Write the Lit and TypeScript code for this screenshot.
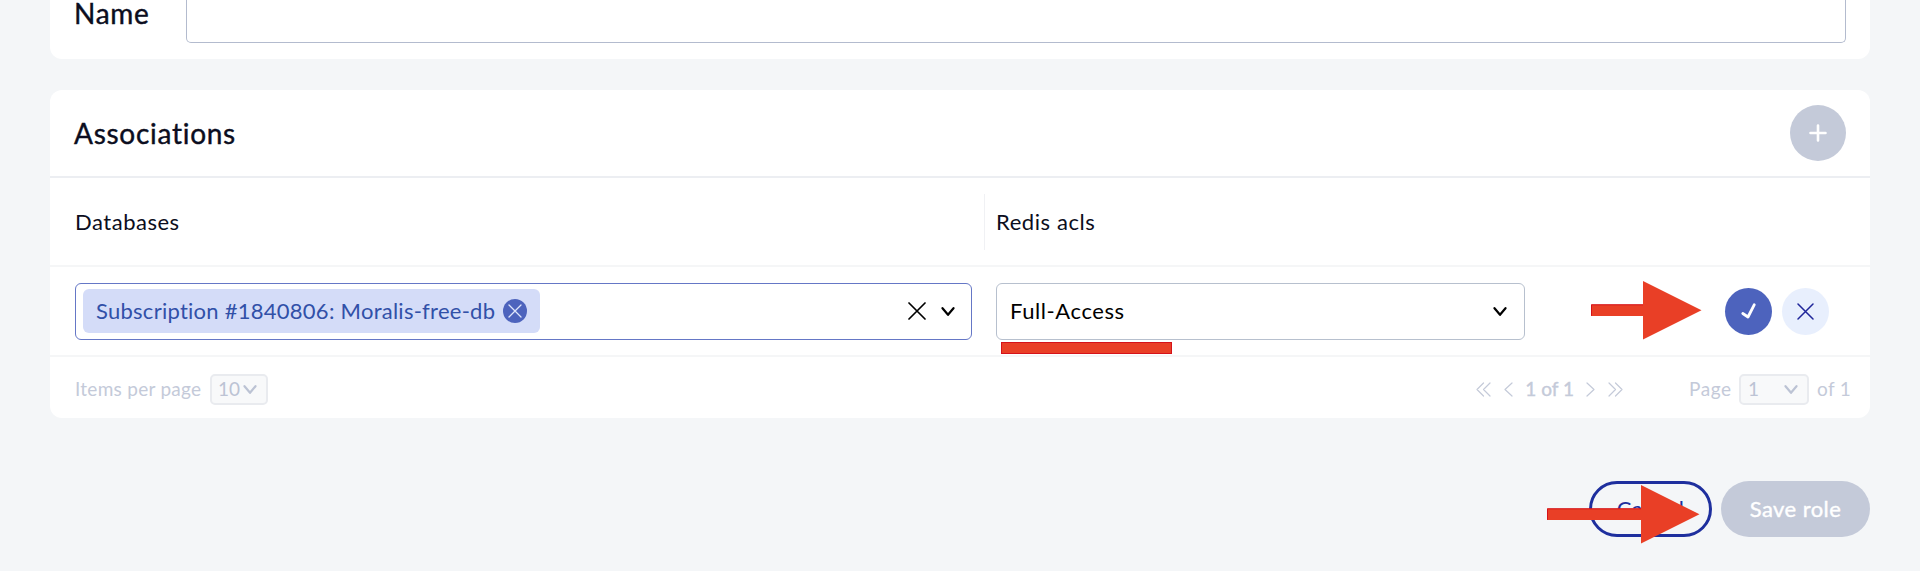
import { LitElement, html, css, svg } from "lit";
import { customElement } from "lit/decorators.js";

const stroke = (d: string, w: number, h: number, sw: number, cls = "") => html`
  <svg class="icon ${cls}" width=${w} height=${h} viewBox="0 0 ${w} ${h}" fill="none"
    stroke="currentColor" stroke-width=${sw} stroke-linecap="round" stroke-linejoin="round">
    ${svg`<path d=${d}></path>`}
  </svg>`;

const chevron = (cls = "") => stroke("M1.5 1.2 L7 7.8 L12.5 1.2", 14, 9, 2.2, cls);
const cross = (s: number, sw: number) => stroke(`M1 1 L${s - 1} ${s - 1} M${s - 1} 1 L1 ${s - 1}`, s, s, sw);

@customElement("red-arrow")
export class RedArrow extends LitElement {
  static properties = { shaft: { type: Number } };
  declare shaft: number;
  static styles = css`
    :host { display: block; line-height: 0; }
  `;
  render() {
    const s = this.shaft;
    return html`<svg width=${s + 59} height="59" viewBox="0 0 ${s + 59} 59">
      <path d="M0 23.5 H${s} V0 L${s + 58.5} 29.3 L${s} 58.5 V35 H0 Z" fill="#e93f26"></path>
      <path d=${`M${s} 23.8 H0.5 V34.7`} fill="none" stroke="#d5121a" stroke-width="1"></path>
    </svg>`;
  }
}

@customElement("app-root")
export class AppRoot extends LitElement {
  static styles = css`
    :host {
      display: block;
      position: relative;
      box-sizing: border-box;
      height: 571px;
      padding: 0 50px;
      overflow: hidden;
      background: #f4f6f8;
      color: #0b0d20;
      font: 22px/30px Lato, "Noto Sans", sans-serif;
      font-variant-ligatures: none;
    }
    * { box-sizing: border-box; }
    .icon { display: block; flex: none; }
    .card { background: #fff; }
    .name {
      display: flex;
      height: 59px;
      padding: 0 24px;
      border-radius: 0 0 12px 12px;
    }
    .title {
      font-size: 28px;
      line-height: 34px;
      letter-spacing: 0.72px;
      -webkit-text-stroke: 0.4px currentColor;
    }
    .name .title { width: 112px; line-height: 27px; }
    .field {
      flex: 1;
      height: 43px;
      border: 1px solid #b3bbce;
      border-top: 0;
      border-radius: 0 0 5px 5px;
    }
    .assoc {
      margin-top: 31px;
      height: 328px;
      border-radius: 12px;
    }
    .head {
      display: flex;
      align-items: center;
      justify-content: space-between;
      height: 88px;
      padding: 0 24px;
      border-bottom: 2px solid #eceef2;
    }
    .head .title { padding-bottom: 1px; }
    .round {
      display: flex;
      align-items: center;
      justify-content: center;
      border-radius: 50%;
    }
    .add { width: 56px; height: 56px; background: #c4cad9; color: #fff; }
    .cols, .row {
      display: grid;
      grid-template-columns: 934px 1fr;
      border-bottom: 2px solid #f5f6f7;
    }
    .cols { height: 89px; align-items: center; letter-spacing: 0.52px; }
    .col { padding: 0 0 0 25px; display: flex; align-items: center; height: 56px; }
    .col + .col { padding-left: 11px; border-left: 1px solid #f0f1f4; letter-spacing: 0.58px; }
    .row { height: 90px; align-items: center; }
    .select {
      display: flex;
      align-items: center;
      height: 57px;
      border: 1px solid #b7c0ce;
      border-radius: 6px;
      color: #000;
    }
    .db { margin: 0 12px 0 25px; border-color: #6577c6; padding: 0 16px 0 7px; }
    .chip {
      display: flex;
      align-items: center;
      gap: 9px;
      width: 457px;
      height: 44px;
      padding: 0 13px 0 13px;
      background: #d4dcf8;
      border-radius: 6px;
      color: #3150a8;
      margin-right: auto;
    }
    .chip span:first-child { width: 398px; white-space: nowrap; letter-spacing: 0.26px; }
    .chip .round { width: 24px; height: 24px; background: #4d63bd; color: #dfe5fb; }
    .gap { margin-left: 15px; display: flex; }
    .acl-cell { display: flex; align-items: center; padding-left: 12px; }
    .acl { width: 529px; padding: 0 17px 0 13px; justify-content: space-between; letter-spacing: 0.58px; }
    .ok { width: 47px; height: 47px; background: #4d63bd; color: #fff; margin-left: 200px; }
    .no { width: 47px; height: 47px; background: #e8effd; color: #20269a; margin-left: 10px; }
    .foot {
      display: flex;
      align-items: center;
      height: 61px;
      padding: 3px 19px 0 25px;
      font-size: 19px;
      line-height: 22px;
      letter-spacing: 0.28px;
      color: #c4cad9;
    }
    .foot > span, .mini span { padding-bottom: 1px; }
    .mini {
      display: flex;
      align-items: center;
      justify-content: space-between;
      height: 31px;
      border: 2px solid #e9ebef;
      border-radius: 5px;
      background: #f8f9fa;
      color: #bcc3d4;
    }
    .ipp { width: 135px; }
    .ten { width: 58px; padding: 0 9px 0 6px; margin-right: auto; letter-spacing: 0; }
    .pager { display: flex; align-items: center; width: 147px; justify-content: space-between; margin-right: 66px; letter-spacing: 0; }
    .bold { -webkit-text-stroke: 0.4px currentColor; }
    .pg { width: 50px; letter-spacing: 0.5px; }
    .one { width: 70px; padding: 0 9px 0 7px; margin-right: 8px; }
    .actions {
      display: flex;
      justify-content: flex-end;
      gap: 9px;
      margin-top: 63px;
      letter-spacing: 0.42px;
    }
    .btn {
      display: flex;
      align-items: center;
      justify-content: center;
      height: 56px;
      padding-bottom: 1px;
      border-radius: 28px;
    }
    .cancel { width: 123px; border: 3px solid #1e2f9e; color: #1e2f9e; }
    .save { width: 149px; background: #c4cad9; color: #fff; }
    .mark { position: absolute; }
    .underline {
      left: 1001px; top: 342px; width: 171px; height: 12px;
      background: #e93f26; border: 1px solid #d5121a;
    }
    .to-ok { left: 1591px; top: 281px; }
    .to-save { left: 1547px; top: 485px; }
  `;

  render() {
    return html`
      <section class="card name">
        <div class="title">Name</div>
        <div class="field"></div>
      </section>
      <section class="card assoc">
        <div class="head">
          <div class="title">Associations</div>
          <div class="round add">${stroke("M9 1.5 V16.5 M1.5 9 H16.5", 18, 18, 2.6)}</div>
        </div>
        <div class="cols">
          <div class="col">Databases</div>
          <div class="col">Redis acls</div>
        </div>
        <div class="row">
          <div class="select db">
            <div class="chip">
              <span>Subscription #1840806: Moralis-free-db</span>
              <span class="round">${cross(14, 1.3)}</span>
            </div>
            ${cross(18, 1.7)}
            <span class="gap">${chevron()}</span>
          </div>
          <div class="acl-cell">
            <div class="select acl"><span>Full-Access</span>${chevron()}</div>
            <div class="round ok">${stroke("M1.8 10.5 L7 14 L13.2 1.8", 15, 16, 2.8)}</div>
            <div class="round no">${cross(17, 1.5)}</div>
          </div>
        </div>
        <div class="foot">
          <span class="ipp">Items per page</span>
          <div class="mini ten"><span>10</span>${chevron()}</div>
          <div class="pager">
            ${stroke("M7.5 1 L1 7.5 L7.5 14 M14 1 L7.5 7.5 L14 14", 15, 15, 1.2)}
            ${stroke("M8 1 L1 7.5 L8 14", 9, 15, 1.2)}
            <span class="bold">1 of 1</span>
            ${stroke("M1 1 L8 7.5 L1 14", 9, 15, 1.2)}
            ${stroke("M1 1 L7.5 7.5 L1 14 M7.5 1 L14 7.5 L7.5 14", 15, 15, 1.2)}
          </div>
          <span class="pg">Page</span>
          <div class="mini one"><span>1</span>${chevron()}</div>
          <span>of 1</span>
        </div>
      </section>
      <div class="actions">
        <div class="btn cancel">Cancel</div>
        <div class="btn save"><span class="bold">Save role</span></div>
      </div>
      <div class="mark underline"></div>
      <red-arrow class="mark to-ok" .shaft=${52}></red-arrow>
      <red-arrow class="mark to-save" .shaft=${94}></red-arrow>
    `;
  }
}
